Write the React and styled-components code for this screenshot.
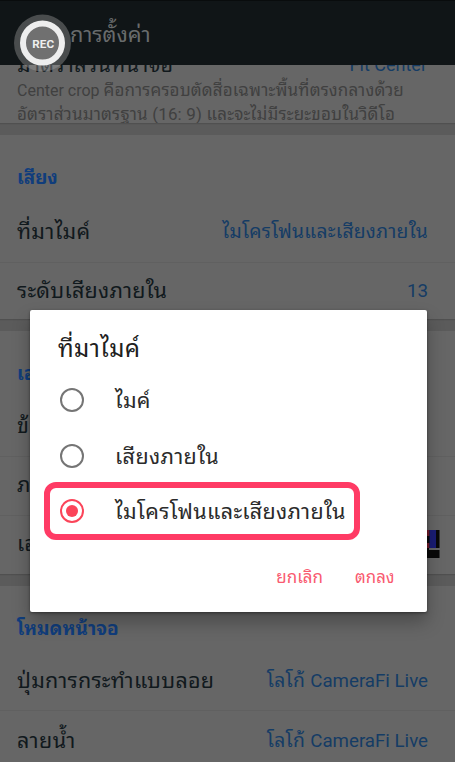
import React from "react";
import styled, { createGlobalStyle } from "styled-components";

const GlobalStyle = createGlobalStyle`
  * { box-sizing: border-box; }
  body { margin: 0; background: #666; }
`;

const Screen = styled.div`
  position: relative;
  width: 455px;
  height: 762px;
  overflow: hidden;
  display: flex;
  flex-direction: column;
  background: #5b5b5b;
  font-family: Roboto, "Noto Sans Thai Looped", "Noto Looped Thai", Loma, Waree, Garuda, "Noto Sans Thai", "Noto Sans", sans-serif;
  color: #11191d;
`;

const Header = styled.header`
  flex: none;
  height: 65px;
  padding: 3px 0 0 70px;
  display: flex;
  align-items: center;
  background: #101517;
  border-top: 1px solid #090c0d;
  color: #686b6c;
`;

const Content = styled.main`
  flex: 1;
  min-height: 0;
  overflow: hidden;
  display: flex;
  flex-direction: column;
  gap: 12px;
`;

const Card = styled.section`
  flex: none;
  height: ${(p) => p.$height}px;
  overflow: hidden;
  background: #666;
  box-shadow: 0 1px 1px #505050;
`;

const Text = styled.span`
  white-space: nowrap;
  font-size: ${(p) => p.$size || 21.5}px;
  letter-spacing: ${(p) => p.$track || 0}px;
  line-height: 30px;
`;

const Latin = styled.span`
  letter-spacing: 0;
  font-size: ${(p) => p.$size}px;
`;

const SectionTitle = styled.h2`
  margin: 0;
  height: ${(p) => p.$height}px;
  padding: 26px 17px 0;
  font-weight: 700;
  line-height: 30px;
  color: #103d7c;
`;

const Row = styled.div`
  height: 59px;
  padding: 0 27px ${(p) => (p.$low ? 0 : 3)}px 17px;
  display: flex;
  align-items: center;
  justify-content: space-between;
  border-bottom: 1px solid #606060;
  &:last-child { border-bottom: 0; }
`;

const Value = styled(Text)`
  color: #153c65;
`;

const ClippedRow = styled.div`
  display: flex;
  justify-content: space-between;
  margin-top: -15px;
  padding: 0 28px 0 17px;
`;

const Description = styled.p`
  display: flex;
  flex-direction: column;
  margin: -1px 0 0;
  padding-left: 17px;
  color: #404040;
  & > span { line-height: 22.5px; }
`;

const Thumb = styled.svg`
  width: 32px;
  height: 30px;
  margin-right: -12px;
`;

const RecordButton = styled.svg`
  position: absolute;
  left: 13px;
  top: 13px;
  width: 60px;
  height: 60px;
`;

const Dialog = styled.div`
  position: absolute;
  left: 30px;
  top: 310px;
  width: 396.5px;
  height: 302px;
  padding: 17px 28px 0 14px;
  display: flex;
  flex-direction: column;
  background: #fff;
  border-radius: 2px;
  box-shadow: 0 10px 18px rgba(0, 0, 0, 0.28), 0 1px 3px rgba(0, 0, 0, 0.4);
  color: #2b2b2b;
`;

const DialogTitle = styled.h1`
  margin: 0 0 13px;
  padding-left: 14px;
  height: 32px;
  font-weight: 400;
  color: #202020;
`;

const Option = styled.div`
  flex: none;
  width: 316px;
  height: 56px;
  padding-left: 16px;
  display: flex;
  align-items: center;
  gap: 31px;
  & > ${Text} { padding-top: 2px; }
`;

const SelectedOption = styled(Option)`
  height: 58px;
  margin-top: -2px;
  padding-left: 10px;
  border: 6px solid #ff3b65;
  border-radius: 12px;
`;

const Radio = styled.span`
  flex: none;
  width: 24px;
  height: 24px;
  border: 2px solid ${(p) => (p.$on ? "#fb4459" : "#757575")};
  border-radius: 50%;
  display: grid;
  place-items: center;
  &::after {
    content: "";
    width: 12px;
    height: 12px;
    border-radius: 50%;
    background: ${(p) => (p.$on ? "#fb4459" : "transparent")};
  }
`;

const Actions = styled.div`
  display: flex;
  justify-content: flex-end;
  gap: 32px;
  padding: 22px 4px 0 0;
  color: #f95a70;
`;

export default function App() {
  return (
    <Screen>
      <GlobalStyle />
      <Header><Text $size={21.8}>การตั้งค่า</Text></Header>
      <Content>
        <Card $height={58}>
          <ClippedRow>
            <Text $track={0.3}>มาตราส่วนหน้าจอ</Text>
            <Value $size={18}>Fit Center</Value>
          </ClippedRow>
          <Description>
            <Text $size={17} $track={0.15}><Latin $size={16}>Center crop </Latin>คือการครอบตัดสื่อเฉพาะพื้นที่ตรงกลางด้วย</Text>
            <Text $size={17} $track={0.17}>อัตราส่วนมาตรฐาน (16: 9) และจะไม่มีระยะขอบในวิดีโอ</Text>
          </Description>
        </Card>
        <Card $height={184}>
          <SectionTitle $height={69}><Text $size={18.8}>เสียง</Text></SectionTitle>
          <Row><Text $track={0.3}>ที่มาไมค์</Text><Value $size={19.3} $track={0.25}>ไมโครโฟนและเสียงภายใน</Value></Row>
          <Row><Text $track={0.25}>ระดับเสียงภายใน</Text><Value $size={18.8}>13</Value></Row>
        </Card>
        <Card $height={243}>
          <SectionTitle $height={67}><Text $size={19}>เอฟเฟกต์</Text></SectionTitle>
          <Row><Text>ข้อความ</Text></Row>
          <Row><Text>ภาพ</Text></Row>
          <Row>
            <Text>เอฟเฟกต์</Text>
            <Thumb viewBox="0 0 32 30">
              <path fill="#090909" d="M0 1h31.5v28H0z" />
              <path fill="#771d2b" d="M16 1h5.5v6H16zM16 14h5.5v5H16z" />
              <path fill="#1a1d75" d="M21.5 1h6.5v18h-6.5z" />
              <path fill="#666" d="M21 19h11v2H21z" />
            </Thumb>
          </Row>
        </Card>
        <Card $height={184}>
          <SectionTitle $height={66}><Text $size={19}>โหมดหน้าจอ</Text></SectionTitle>
          <Row $low><Text $track={0.25}>ปุ่มการกระทำแบบลอย</Text><Value $size={19.3} $track={0.3}>โลโก้ <Latin $size={18.7}>CameraFi Live</Latin></Value></Row>
          <Row $low><Text $track={0.5}>ลายน้ำ</Text><Value $size={19.3} $track={0.3}>โลโก้ <Latin $size={18.7}>CameraFi Live</Latin></Value></Row>
        </Card>
      </Content>
      <RecordButton viewBox="0 0 60 60">
        <circle cx="29.5" cy="30" r="28.5" fill="#a0a0a0" fillOpacity=".4" />
        <circle cx="29.5" cy="30" r="19.5" fill="#707070" stroke="#eee" strokeWidth="6" />
        <text x="30.2" y="35" textAnchor="middle" fill="#eee" fontFamily="Roboto, sans-serif" fontWeight="700" fontSize="11.7">REC</text>
      </RecordButton>
      <Dialog>
        <DialogTitle><Text $size={24} $track={0.4}>ที่มาไมค์</Text></DialogTitle>
        <Option><Radio /><Text $track={0.3}>ไมค์</Text></Option>
        <Option><Radio /><Text $track={0.4}>เสียงภายใน</Text></Option>
        <SelectedOption><Radio $on /><Text $track={0.35}>ไมโครโฟนและเสียงภายใน</Text></SelectedOption>
        <Actions><Text $size={17}>ยกเลิก</Text><Text $size={16.8}>ตกลง</Text></Actions>
      </Dialog>
    </Screen>
  );
}
